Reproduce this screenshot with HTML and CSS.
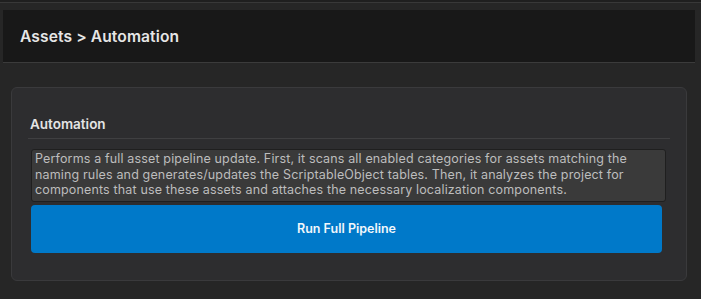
FILE: index.html
```html
<!DOCTYPE html>
<html lang="en">
<head>
  <meta charset="UTF-8" />
  <meta name="viewport" content="width=device-width, initial-scale=1" />
  <title>Assets &gt; Automation</title>
  <link rel="stylesheet" href="styles.css">
</head>
<body>
  <div class="top-strip"></div>

  <header class="page-header">
    <h1>Assets &gt; Automation</h1>
  </header>

  <div class="card">
    <h2 class="section-title">Automation</h2>
    <div class="help-box">Performs a full asset pipeline update. First, it scans all enabled categories for assets matching the naming rules and generates/updates the ScriptableObject tables. Then, it analyzes the project for components that use these assets and attaches the necessary localization components.</div>
    <button class="run-btn" type="button">Run Full Pipeline</button>
  </div>
</body>
</html>
```

FILE: styles.css
```css
* { margin: 0; padding: 0; box-sizing: border-box; }
body {
  font-family: Inter, 'Noto Sans', sans-serif;
  background: #262626;
  color: #e2e2e2;
  min-height: 100vh;
}
.top-strip { height: 3px; background: #1f1f1f; border-bottom: 1px solid #383838; }
.page-header {
  margin: 7px 6px 0 3px; height: 53px; background: #181818;
  border-bottom: 1px solid #3b3b3b; padding-left: 17px;
  display: flex; align-items: center;
}
.page-header h1 { font-size: 15.6px; font-weight: 600; color: #e6e6e6; letter-spacing: 0.1px; }
.card {
  margin: 24px 0 0 11px; width: 676px; height: 194px;
  background: #2d2d2f; border: 1px solid #3a3a3c; border-radius: 6px;
  padding: 27px 16px 0 16px;
}
.section-title {
  font-size: 13.5px; font-weight: 600; color: #e4e4e4; padding: 0 0 4px 2px;
  border-bottom: 1px solid #3f3f41; line-height: 19px;
}
.help-box {
  margin: 10px 4px 0 3px; background: #3a3a3a; border: 1px solid #1f1f1f; border-radius: 3px;
  padding: 1px 3px 3px; font-size: 12.5px; line-height: 15.5px; color: #bdbdbd;
  letter-spacing: 0.15px;
}
.run-btn {
  display: block; margin: 3px 8px 0 3px; width: calc(100% - 11px); height: 48px;
  background: #0079c9; color: #f2f7fb; border: none; border-radius: 4px;
  font-family: Inter, 'Noto Sans', sans-serif; font-size: 12.5px; font-weight: 600; cursor: pointer;
}
```
